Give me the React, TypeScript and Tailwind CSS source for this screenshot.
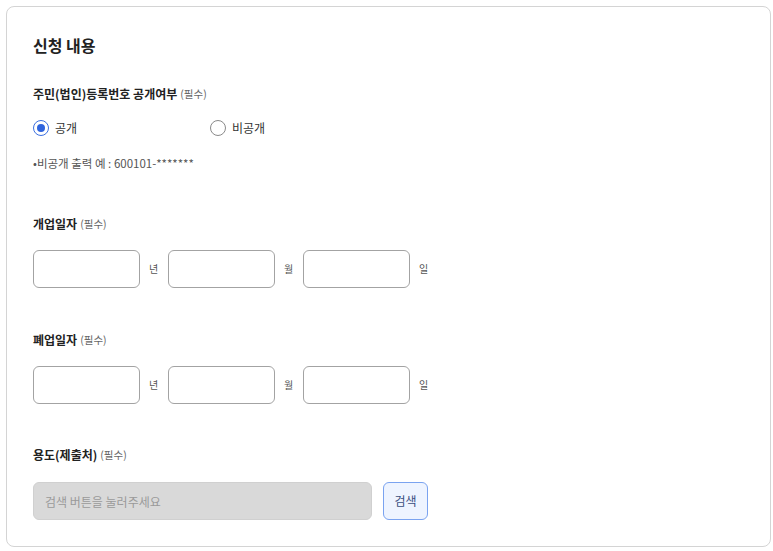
import React, { useState } from 'react';

const FONT = { fontFamily: '"Noto Sans CJK KR", "Noto Sans", sans-serif' };

function Label({ text }: { text: string }) {
  return (
    <div className="h-[20px] flex items-center gap-[3px] text-[#222]">
      <span className="text-[12px] leading-[20px] font-bold">{text}</span>
      <span className="text-[10.5px] leading-[20px] text-[#666]">(필수)</span>
    </div>
  );
}

function DateRow() {
  return (
    <div className="flex items-center h-[38px]">
      {['년', '월', '일'].map((unit, i) => (
        <div key={unit} className={`flex items-center ${i > 0 ? 'ml-[10px]' : ''}`}>
          <input className="w-[107px] h-[38px] rounded-[6px] border border-[#a3a3a3] bg-white outline-none px-2 text-[13px]" />
          <span className="ml-[9px] w-[9px] text-[10px] leading-[14px] text-[#555] whitespace-nowrap">{unit}</span>
        </div>
      ))}
    </div>
  );
}

export default function App() {
  const [open, setOpen] = useState(true);

  return (
    <div className="w-[773px] h-[551px] bg-white pt-[6px] pl-[6px]" style={FONT}>
      <div className="w-[765px] h-[541px] border border-[#d4d4d4] rounded-[8px] px-[26px] pt-[26px]">
        <h2 className="h-[24px] text-[16px] leading-[24px] font-bold text-[#222]">신청 내용</h2>

        <div className="mt-[27px]">
          <Label text="주민(법인)등록번호 공개여부" />
        </div>

        {/* 공개 / 비공개 */}
        <div className="mt-[14px] flex items-center h-[20px] text-[12px] leading-[20px] text-[#333]">
          <button onClick={() => setOpen(true)} className="w-[177px] flex items-center gap-[6px]">
            <span className={`w-[16px] h-[16px] rounded-full border flex items-center justify-center ${open ? 'border-[#3b6fe0]' : 'border-[#8a8a8a]'}`}>
              {open && <span className="w-[8px] h-[8px] rounded-full bg-[#2f64dd]" />}
            </span>
            공개
          </button>
          <button onClick={() => setOpen(false)} className="flex items-center gap-[6px]">
            <span className={`w-[16px] h-[16px] rounded-full border flex items-center justify-center ${!open ? 'border-[#3b6fe0]' : 'border-[#8a8a8a]'}`}>
              {!open && <span className="w-[8px] h-[8px] rounded-full bg-[#2f64dd]" />}
            </span>
            비공개
          </button>
        </div>

        <p className="mt-[17px] h-[16px] text-[11.5px] leading-[16px] text-[#555]">•비공개 출력 예 : 600101-*******</p>

        <div className="mt-[43px]">
          <Label text="개업일자" />
        </div>
        <div className="mt-[16px]">
          <DateRow />
        </div>

        <div className="mt-[42px]">
          <Label text="폐업일자" />
        </div>
        <div className="mt-[16px]">
          <DateRow />
        </div>

        <div className="mt-[41px]">
          <Label text="용도(제출처)" />
        </div>
        <div className="mt-[17px] flex items-center gap-[11px] h-[38px]">
          <input
            disabled
            placeholder="검색 버튼을 눌러주세요"
            className="w-[339px] h-[38px] rounded-[6px] bg-[#d9d9d9] border border-[#d0d0d0] px-[11px] text-[12px] placeholder:text-[#9a9a9a]"
          />
          <button className="w-[45px] h-[38px] rounded-[6px] border border-[#7aa3f0] bg-[#eef4ff] text-[12px] text-[#3a4f80]">
            검색
          </button>
        </div>
      </div>
    </div>
  );
}
